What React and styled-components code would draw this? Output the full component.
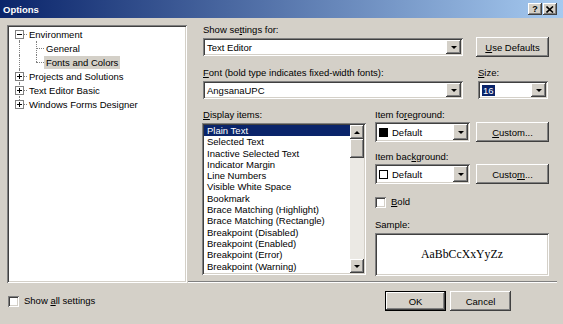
import React from 'react';
import styled, { createGlobalStyle } from 'styled-components';

const GlobalStyle = createGlobalStyle`
  html, body { margin: 0; padding: 0; background: #d4d0c8; }
  body {
    font-family: "Liberation Sans", Arial, sans-serif;
    font-size: 9.5px;
    color: #000;
  }
`;

const raised = `box-shadow: inset -1px -1px #404040, inset 1px 1px #ffffff, inset -2px -2px #808080, inset 2px 2px #d4d0c8;`;
const sunken = `box-shadow: inset 1px 1px #808080, inset -1px -1px #ffffff, inset 2px 2px #404040, inset -2px -2px #d4d0c8;`;

const Dialog = styled.div`
  width: 563px;
  height: 324px;
  background: #d4d0c8;
  display: flex;
  flex-direction: column;
  overflow: hidden;
`;

const TitleBar = styled.div`
  height: 18px;
  flex: none;
  display: flex;
  align-items: center;
  padding: 0 6px 0 3px;
  background: linear-gradient(to right, #0a246a, #a6caf0);
`;

const TitleText = styled.span`
  color: #fff;
  font-weight: bold;
  font-size: 9.5px;
`;

const CaptionButtons = styled.div`
  margin-left: auto;
  display: flex;
  gap: 1px;
`;

const CaptionButton = styled.div`
  width: 14px;
  height: 12px;
  background: #d4d0c8;
  ${raised}
  display: flex;
  align-items: center;
  justify-content: center;
  font-weight: bold;
  font-size: 9px;
`;

const Body = styled.div`
  display: flex;
  align-items: flex-start;
  padding: 6px 0 0 7px;
`;

const Tree = styled.div`
  width: 180px;
  height: 258px;
  margin-top: 1px;
  box-sizing: border-box;
  padding: 2px;
  background: #fff;
  ${sunken}
`;

const TreeRow = styled.div`
  display: flex;
  height: 14px;
  align-items: center;
`;

const Guide = styled.span`
  position: relative;
  flex: none;
  align-self: stretch;
  width: ${p => p.$w}px;
  display: flex;
  align-items: center;
  &::before {
    content: '';
    position: absolute;
    left: ${p => p.$x}px;
    top: ${p => (p.$v === 'bottom' ? '50%' : '0')};
    bottom: ${p => (p.$v === 'top' ? '50%' : '0')};
    border-left: 1px dotted #808080;
    display: ${p => (p.$v ? 'block' : 'none')};
  }
  &::after {
    content: '';
    position: absolute;
    left: ${p => p.$x}px;
    top: 50%;
    width: ${p => p.$h || 0}px;
    border-top: 1px dotted #808080;
    display: ${p => (p.$h ? 'block' : 'none')};
  }
`;

const Expander = styled.span`
  position: relative;
  z-index: 1;
  margin-left: 6px;
  width: 9px;
  height: 9px;
  box-sizing: border-box;
  border: 1px solid #808080;
  background: #fff;
  display: flex;
  align-items: center;
  justify-content: center;
  &::before {
    content: '';
    width: 5px;
    height: 1px;
    background: #000;
  }
  &::after {
    content: '';
    position: absolute;
    width: 1px;
    height: 5px;
    background: #000;
    display: ${p => (p.$open ? 'none' : 'block')};
  }
`;

const TreeLabel = styled.span`
  padding: 0 2px;
  line-height: 13px;
  white-space: nowrap;
  background: ${p => (p.$selected ? '#d4d0c8' : 'transparent')};
`;

const RightSide = styled.div`
  margin-left: 1px;
  width: 369px;
  display: flex;
  flex-direction: column;
`;

const Panel = styled.div`
  padding-left: 15px;
  display: flex;
  flex-direction: column;
`;

const Row = styled.div`
  display: flex;
  gap: ${p => p.$gap || 0}px;
  margin-top: ${p => p.$mt || 0}px;
  align-items: ${p => p.$align || 'flex-start'};
`;

const Field = styled.div`
  display: flex;
  flex-direction: column;
  gap: ${p => (p.$gap === undefined ? 2 : p.$gap)}px;
  width: ${p => p.$w}px;
  margin-top: ${p => p.$mt || 0}px;
`;

const Label = styled.div`
  height: 12px;
  line-height: 12px;
  white-space: nowrap;
`;

const Key = styled.span`
  text-decoration: underline;
`;

const Combo = styled.div`
  width: ${p => p.$w}px;
  height: ${p => p.$h || 18}px;
  box-sizing: border-box;
  padding: 2px;
  background: #fff;
  ${sunken}
  display: flex;
  align-items: stretch;
  flex: none;
`;

const ComboText = styled.div`
  flex: 1;
  display: flex;
  align-items: center;
  gap: 4px;
  padding-left: 2px;
  white-space: nowrap;
  overflow: hidden;
`;

const Arrow = styled.div`
  width: ${p => p.$w || 15}px;
  height: ${p => p.$h ? `${p.$h}px` : 'auto'};
  flex: none;
  background: #d4d0c8;
  ${raised}
  display: flex;
  align-items: center;
  justify-content: center;
  &::after {
    content: '';
    width: 0;
    height: 0;
    border-left: 3px solid transparent;
    border-right: 3px solid transparent;
    ${p => (p.$up ? 'border-bottom: 3px solid #000;' : 'border-top: 3px solid #000;')}
  }
`;

const Highlight = styled.span`
  background: #0a246a;
  color: #fff;
  padding: 0 1px;
  line-height: 11px;
`;

const Swatch = styled.span`
  width: 9px;
  height: 9px;
  box-sizing: border-box;
  border: 1px solid #000;
  background: ${p => p.$color};
  flex: none;
`;

const Button = styled.button`
  width: ${p => p.$w || 73}px;
  height: 20px;
  flex: none;
  border: none;
  padding: 0;
  margin: 0;
  font: inherit;
  color: #000;
  background: #d4d0c8;
  ${p => (p.$default
    ? 'box-shadow: inset 0 0 0 1px #000, inset -2px -2px #404040, inset 2px 2px #fff, inset -3px -3px #808080;'
    : raised)}
  align-self: ${p => p.$self || 'auto'};
  margin-bottom: ${p => p.$mb || 0}px;
`;

const ListBox = styled.div`
  width: 164px;
  height: 152px;
  box-sizing: border-box;
  padding: 2px;
  background: #fff;
  ${sunken}
  display: flex;
  margin-left: -1px;
`;

const ListItems = styled.div`
  flex: 1;
  overflow: hidden;
`;

const ListItem = styled.div`
  height: 11.3px;
  line-height: 11.3px;
  padding-left: 3px;
  white-space: nowrap;
  background: ${p => (p.$selected ? '#0a246a' : 'transparent')};
  color: ${p => (p.$selected ? '#fff' : '#000')};
`;

const ScrollBar = styled.div`
  width: 14px;
  flex: none;
  display: flex;
  flex-direction: column;
  background: #ebe9e4;
`;

const Thumb = styled.div`
  height: 19px;
  background: #d4d0c8;
  ${raised}
`;

const Track = styled.div`
  flex: 1;
`;

const ColorColumn = styled.div`
  width: 174px;
  margin-left: 9px;
  display: flex;
  flex-direction: column;
`;

const CheckRow = styled.label`
  display: flex;
  align-items: center;
  gap: 5px;
  margin-top: ${p => p.$mt || 0}px;
  line-height: 12px;
`;

const CheckBox = styled.span`
  width: 11px;
  height: 11px;
  box-sizing: border-box;
  background: #fff;
  ${sunken}
  flex: none;
`;

const SampleBox = styled.div`
  height: 43px;
  margin-top: 1px;
  background: #fff;
  ${sunken}
  display: flex;
  align-items: center;
  justify-content: center;
  font-family: "Liberation Serif", "Times New Roman", serif;
  font-size: 11.8px;
`;

const Separator = styled.div`
  margin-top: 5px;
  height: 0;
  border-top: 1px solid #808080;
  border-bottom: 1px solid #fff;
`;

const Footer = styled.div`
  display: flex;
  align-items: center;
  margin-top: 8px;
  padding: 0 52px 0 8px;
`;

const FooterButtons = styled.div`
  margin-left: auto;
  display: flex;
  gap: 4px;
`;

const items = [
  'Plain Text',
  'Selected Text',
  'Inactive Selected Text',
  'Indicator Margin',
  'Line Numbers',
  'Visible White Space',
  'Bookmark',
  'Brace Matching (Highlight)',
  'Brace Matching (Rectangle)',
  'Breakpoint (Disabled)',
  'Breakpoint (Enabled)',
  'Breakpoint (Error)',
  'Breakpoint (Warning)',
];

export default function App() {
  return (
    <>
      <GlobalStyle />
      <Dialog>
        <TitleBar>
          <TitleText>Options</TitleText>
          <CaptionButtons>
            <CaptionButton>?</CaptionButton>
            <CaptionButton>
              <svg width="8" height="7" viewBox="0 0 8 7">
                <path d="M0.5 0.5 L7 6.5 M7 0.5 L0.5 6.5" stroke="#000" strokeWidth="1.6" />
              </svg>
            </CaptionButton>
          </CaptionButtons>
        </TitleBar>

        <Body>
          <Tree>
            <TreeRow>
              <Guide $w={18} $x={10} $v="bottom" $h={8}><Expander $open /></Guide>
              <TreeLabel>Environment</TreeLabel>
            </TreeRow>
            <TreeRow>
              <Guide $w={18} $x={10} $v="full" />
              <Guide $w={17} $x={9} $v="full" $h={8} />
              <TreeLabel>General</TreeLabel>
            </TreeRow>
            <TreeRow>
              <Guide $w={18} $x={10} $v="full" />
              <Guide $w={17} $x={9} $v="top" $h={8} />
              <TreeLabel $selected>Fonts and Colors</TreeLabel>
            </TreeRow>
            <TreeRow>
              <Guide $w={18} $x={10} $v="full" $h={8}><Expander /></Guide>
              <TreeLabel>Projects and Solutions</TreeLabel>
            </TreeRow>
            <TreeRow>
              <Guide $w={18} $x={10} $v="full" $h={8}><Expander /></Guide>
              <TreeLabel>Text Editor Basic</TreeLabel>
            </TreeRow>
            <TreeRow>
              <Guide $w={18} $x={10} $v="top" $h={8}><Expander /></Guide>
              <TreeLabel>Windows Forms Designer</TreeLabel>
            </TreeRow>
          </Tree>

          <RightSide>
            <Panel>
              <Row $gap={13}>
                <Field $w={260}>
                  <Label>Show se<Key>t</Key>tings for:</Label>
                  <Combo $w={260}>
                    <ComboText>Text Editor</ComboText>
                    <Arrow />
                  </Combo>
                </Field>
                <Button $self="flex-end" $mb={-1}><Key>U</Key>se Defaults</Button>
              </Row>

              <Row $gap={15} $mt={11}>
                <Field $w={260}>
                  <Label><Key>F</Key>ont (bold type indicates fixed-width fonts):</Label>
                  <Combo $w={260}>
                    <ComboText>AngsanaUPC</ComboText>
                    <Arrow />
                  </Combo>
                </Field>
                <Field $w={70}>
                  <Label><Key>S</Key>ize:</Label>
                  <Combo $w={70}>
                    <ComboText><Highlight>16</Highlight></ComboText>
                    <Arrow />
                  </Combo>
                </Field>
              </Row>

              <Row $mt={10}>
                <Field $w={163}>
                  <Label><Key>D</Key>isplay items:</Label>
                  <ListBox>
                    <ListItems>
                      {items.map((name, i) => (
                        <ListItem key={name} $selected={i === 0}>{name}</ListItem>
                      ))}
                    </ListItems>
                    <ScrollBar>
                      <Arrow $w={14} $h={14} $up />
                      <Thumb />
                      <Track />
                      <Arrow $w={14} $h={14} />
                    </ScrollBar>
                  </ListBox>
                </Field>

                <ColorColumn>
                  <Field $gap={1}>
                    <Label>Item fo<Key>r</Key>eground:</Label>
                    <Row $gap={6}>
                      <Combo $w={95} $h={20}>
                        <ComboText><Swatch $color="#000" />Default</ComboText>
                        <Arrow />
                      </Combo>
                      <Button><Key>C</Key>ustom...</Button>
                    </Row>
                  </Field>
                  <Field $gap={1} $mt={9}>
                    <Label>Item bac<Key>k</Key>ground:</Label>
                    <Row $gap={6}>
                      <Combo $w={95} $h={20}>
                        <ComboText><Swatch $color="#fff" />Default</ComboText>
                        <Arrow />
                      </Combo>
                      <Button>Custo<Key>m</Key>...</Button>
                    </Row>
                  </Field>
                  <CheckRow $mt={12}>
                    <CheckBox />
                    <span><Key>B</Key>old</span>
                  </CheckRow>
                  <Field $gap={1} $mt={11}>
                    <Label>Sample:</Label>
                    <SampleBox>AaBbCcXxYyZz</SampleBox>
                  </Field>
                </ColorColumn>
              </Row>
            </Panel>
            <Separator />
          </RightSide>
        </Body>

        <Footer>
          <CheckRow>
            <CheckBox />
            <span>Show <Key>a</Key>ll settings</span>
          </CheckRow>
          <FooterButtons>
            <Button $w={61} $default>OK</Button>
            <Button $w={61}>Cancel</Button>
          </FooterButtons>
        </Footer>
      </Dialog>
    </>
  );
}
